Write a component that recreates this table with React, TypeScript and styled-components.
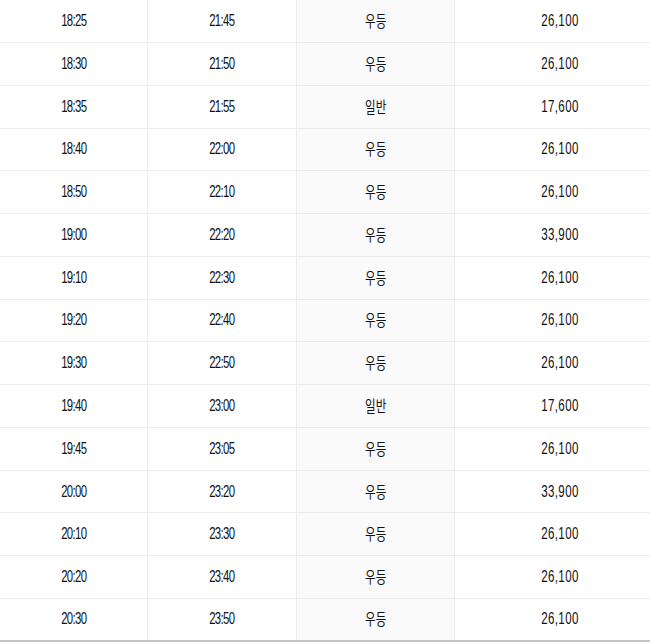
import React from "react";
import styled, { createGlobalStyle } from "styled-components";

const Global = createGlobalStyle`
  html, body { margin: 0; padding: 0; background: #ffffff; }
  body { width: 650px; height: 642px; overflow: hidden; }
`;

const Table = styled.div`
  display: flex;
  flex-direction: column;
  width: 665px;
  background: #ffffff;
  color: #111111;
`;

const Row = styled.div<{ $h: number; $last?: boolean }>`
  display: grid;
  grid-template-columns: 148px 149px 158px 1fr;
  height: ${(p) => p.$h}px;
  box-sizing: border-box;
  border-bottom: ${(p) => (p.$last ? "2px solid #c4c4c4" : "1px solid #ececec")};
  flex: none;
`;

const Cell = styled.div<{ $shade?: boolean; $end?: boolean }>`
  display: flex;
  align-items: center;
  justify-content: center;
  box-sizing: border-box;
  border-right: ${(p) => (p.$end ? "none" : "1px solid #ececec")};
  background: ${(p) => (p.$shade ? "#fafafa" : "transparent")};
`;

const Time = styled.span`
  display: inline-block;
  font-family: "Liberation Sans", Arial, sans-serif;
  font-size: 16px;
  letter-spacing: -0.9px;
  line-height: 1;
  transform: scaleX(0.71);
`;

const Price = styled.span`
  display: inline-block;
  font-family: "Liberation Sans", Arial, sans-serif;
  font-size: 16px;
  letter-spacing: 0.5px;
  line-height: 1;
  transform: scaleX(0.72);
`;

const Grade = styled.span`
  display: inline-block;
  font-family: "Noto Sans CJK KR", sans-serif;
  font-size: 16px;
  font-weight: 400;
  line-height: 1;
  transform: translateY(-1px) scaleX(0.72);
`;

const rows: [string, string, string, string][] = [
  ["18:25", "21:45", "우등", "26,100"],
  ["18:30", "21:50", "우등", "26,100"],
  ["18:35", "21:55", "일반", "17,600"],
  ["18:40", "22:00", "우등", "26,100"],
  ["18:50", "22:10", "우등", "26,100"],
  ["19:00", "22:20", "우등", "33,900"],
  ["19:10", "22:30", "우등", "26,100"],
  ["19:20", "22:40", "우등", "26,100"],
  ["19:30", "22:50", "우등", "26,100"],
  ["19:40", "23:00", "일반", "17,600"],
  ["19:45", "23:05", "우등", "26,100"],
  ["20:00", "23:20", "우등", "33,900"],
  ["20:10", "23:30", "우등", "26,100"],
  ["20:20", "23:40", "우등", "26,100"],
  ["20:30", "23:50", "우등", "26,100"],
];

export default function App() {
  return (
    <>
      <Global />
      <Table>
        {rows.map((r, i) => {
          const last = i === rows.length - 1;
          const h = i === 0 || last ? 43 : 42.77;
          return (
            <Row key={i} $h={h} $last={last}>
              <Cell>
                <Time>{r[0]}</Time>
              </Cell>
              <Cell>
                <Time>{r[1]}</Time>
              </Cell>
              <Cell $shade>
                <Grade>{r[2]}</Grade>
              </Cell>
              <Cell $end>
                <Price>{r[3]}</Price>
              </Cell>
            </Row>
          );
        })}
      </Table>
    </>
  );
}
